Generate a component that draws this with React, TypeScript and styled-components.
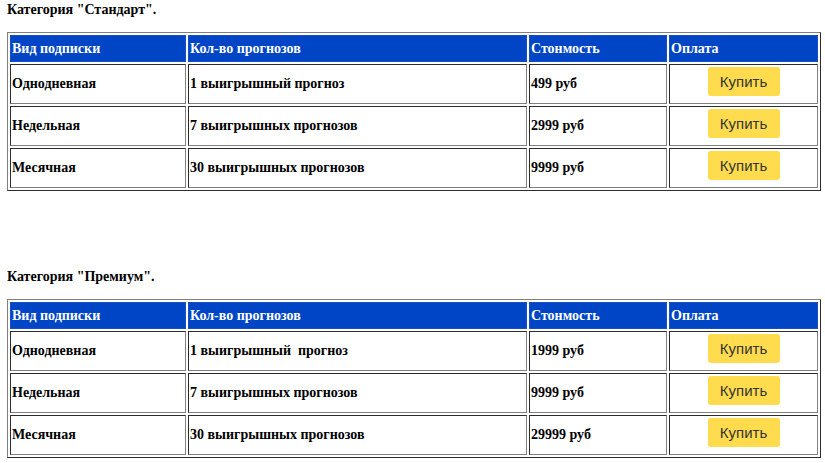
import React from 'react';
import styled, { createGlobalStyle } from 'styled-components';

const GlobalStyle = createGlobalStyle`
  html, body {
    margin: 0;
    padding: 0;
    background: #ffffff;
  }
  body {
    font-family: "Liberation Serif", "Times New Roman", serif;
    color: #000;
  }
`;

const Page = styled.div`
  padding: 2px 0 0 7px;
`;

const Section = styled.section`
  margin-bottom: 78px;
  &:last-child {
    margin-bottom: 0;
  }
`;

const Title = styled.div`
  font-size: 14px;
  font-weight: bold;
  line-height: 16px;
  margin-bottom: 14px;
`;

const Table = styled.table`
  box-sizing: border-box;
  width: 814px;
  table-layout: fixed;
  border-collapse: separate;
  border-spacing: 2px;
  border: 1px outset #808080;
  font-size: 14px;
  font-weight: bold;
`;

const HeadCell = styled.th<{ $w: number }>`
  box-sizing: border-box;
  width: ${(p) => p.$w}px;
  height: 27px;
  padding: 1px;
  border: 1px solid #1a4fc4;
  background: #0045c6;
  color: #ffffff;
  text-align: left;
  font-weight: bold;
  vertical-align: middle;
`;

const Cell = styled.td<{ $center?: boolean }>`
  box-sizing: border-box;
  height: 40px;
  padding: 1px;
  border: 1px inset #808080;
  vertical-align: middle;
  text-align: ${(p) => (p.$center ? 'center' : 'left')};
`;

const BuyButton = styled.button`
  display: block;
  width: 72px;
  height: 29px;
  margin: 1px auto 6px;
  padding: 0;
  border: none;
  border-radius: 3px;
  background: #ffdb4d;
  color: #333;
  font-family: "Liberation Sans", Arial, sans-serif;
  font-size: 15px;
  font-weight: normal;
  cursor: pointer;
`;

type Row = { kind: string; count: string; price: string };

const plans: { title: string; rows: Row[] }[] = [
  {
    title: 'Категория "Стандарт".',
    rows: [
      { kind: 'Однодневная', count: '1 выигрышный прогноз', price: '499 руб' },
      { kind: 'Недельная', count: '7 выигрышных прогнозов', price: '2999 руб' },
      { kind: 'Месячная', count: '30 выигрышных прогнозов', price: '9999 руб' },
    ],
  },
  {
    title: 'Категория "Премиум".',
    rows: [
      { kind: 'Однодневная', count: '1 выигрышный\u00a0 прогноз', price: '1999 руб' },
      { kind: 'Недельная', count: '7 выигрышных прогнозов', price: '9999 руб' },
      { kind: 'Месячная', count: '30 выигрышных прогнозов', price: '29999 руб' },
    ],
  },
];

const headers = [
  { label: 'Вид подписки', w: 176 },
  { label: 'Кол-во прогнозов', w: 339 },
  { label: 'Стонмость', w: 138 },
  { label: 'Оплата', w: 149 },
];

const PriceTable: React.FC<{ title: string; rows: Row[] }> = ({ title, rows }) => (
  <Section>
    <Title>{title}</Title>
    <Table>
      <thead>
        <tr>
          {headers.map((h) => (
            <HeadCell key={h.label} $w={h.w}>
              {h.label}
            </HeadCell>
          ))}
        </tr>
      </thead>
      <tbody>
        {rows.map((r, i) => (
          <tr key={i}>
            <Cell>{r.kind}</Cell>
            <Cell>{r.count}</Cell>
            <Cell>{r.price}</Cell>
            <Cell $center>
              <BuyButton>Купить</BuyButton>
            </Cell>
          </tr>
        ))}
      </tbody>
    </Table>
  </Section>
);

const App: React.FC = () => (
  <Page>
    <GlobalStyle />
    {plans.map((p, i) => (
      <PriceTable key={i} title={p.title} rows={p.rows} />
    ))}
  </Page>
);

export default App;
